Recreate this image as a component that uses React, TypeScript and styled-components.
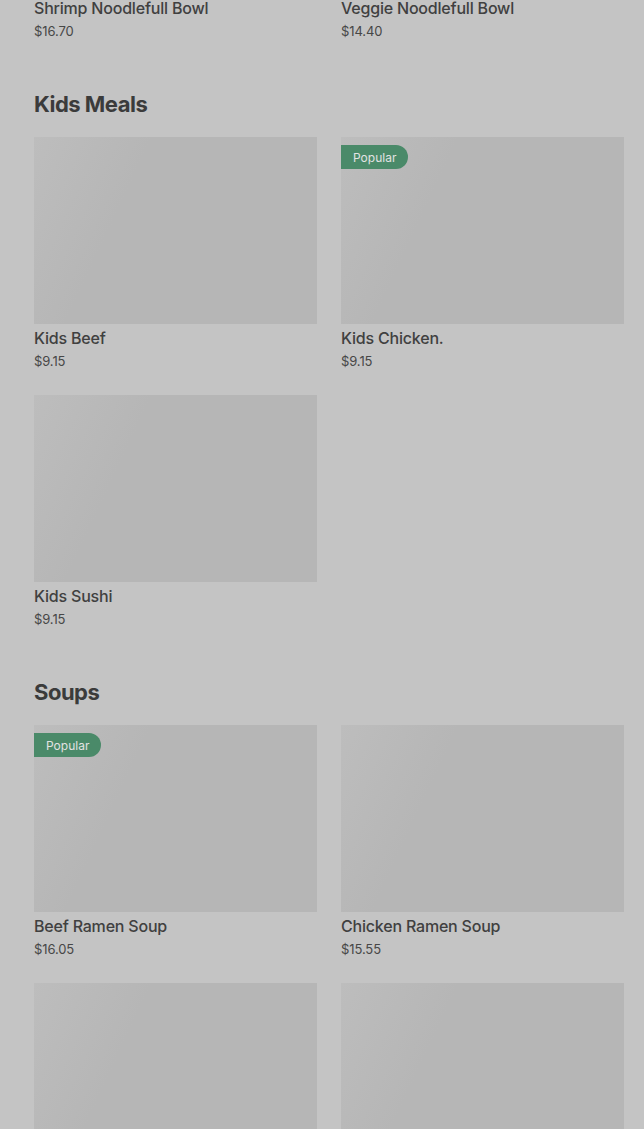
import React from "react";
import styled, { createGlobalStyle } from "styled-components";

const GlobalStyle = createGlobalStyle`
  html, body {
    margin: 0;
    padding: 0;
    background: #c4c4c4;
    font-family: Inter, "Noto Sans", "Liberation Sans", sans-serif;
  }
`;

const Page = styled.div`
  padding: 0 20px 0 34px;
  margin-top: -193px;
  overflow: hidden;
`;

const Section = styled.section`
  margin-bottom: 49px;
`;

const Heading = styled.h2`
  margin: 0 0 19px;
  font-size: 22px;
  line-height: 28px;
  font-weight: 700;
  letter-spacing: -0.5px;
  color: #3b3b3b;
`;

const Grid = styled.div`
  display: grid;
  grid-template-columns: 1fr 1fr;
  column-gap: 24px;
  row-gap: 24px;
`;

const Card = styled.div`
  display: flex;
  flex-direction: column;
`;

const Photo = styled.div`
  position: relative;
  height: 187px;
  background: linear-gradient(115deg, #bdbdbd 0%, #b9b9b9 18%, #b6b6b6 32%, #b6b6b6 100%);
`;

const Badge = styled.span`
  position: absolute;
  top: 8px;
  left: 0;
  height: 24px;
  padding: 0 12px;
  display: flex;
  align-items: center;
  background: #4a8a69;
  color: #e2e2e2;
  font-size: 12px;
  border-radius: 0 12px 12px 0;
`;

const Name = styled.div`
  margin-top: 3px;
  font-size: 16px;
  line-height: 22px;
  font-weight: 500;
  letter-spacing: -0.2px;
  color: #404040;
`;

const Price = styled.div`
  margin-top: 2px;
  font-size: 13px;
  line-height: 20px;
  letter-spacing: -0.1px;
  color: #474747;
`;

type Item = { name: string; price: string; popular?: boolean };

const sections: { title?: string; items: Item[] }[] = [
  {
    items: [
      { name: "Shrimp Noodlefull Bowl", price: "$16.70" },
      { name: "Veggie Noodlefull Bowl", price: "$14.40" },
    ],
  },
  {
    title: "Kids Meals",
    items: [
      { name: "Kids Beef", price: "$9.15" },
      { name: "Kids Chicken.", price: "$9.15", popular: true },
      { name: "Kids Sushi", price: "$9.15" },
    ],
  },
  {
    title: "Soups",
    items: [
      { name: "Beef Ramen Soup", price: "$16.05", popular: true },
      { name: "Chicken Ramen Soup", price: "$15.55" },
      { name: "Miso Soup", price: "$4.50" },
      { name: "Spicy Ramen Soup", price: "$16.05" },
    ],
  },
];

const App = () => {
  return (
    <>
      <GlobalStyle />
      <Page>
        {sections.map((s, i) => (
          <Section key={i}>
            {s.title && <Heading>{s.title}</Heading>}
            <Grid>
              {s.items.map((item) => (
                <Card key={item.name}>
                  <Photo>{item.popular && <Badge>Popular</Badge>}</Photo>
                  <Name>{item.name}</Name>
                  <Price>{item.price}</Price>
                </Card>
              ))}
            </Grid>
          </Section>
        ))}
      </Page>
    </>
  );
};

export default App;
